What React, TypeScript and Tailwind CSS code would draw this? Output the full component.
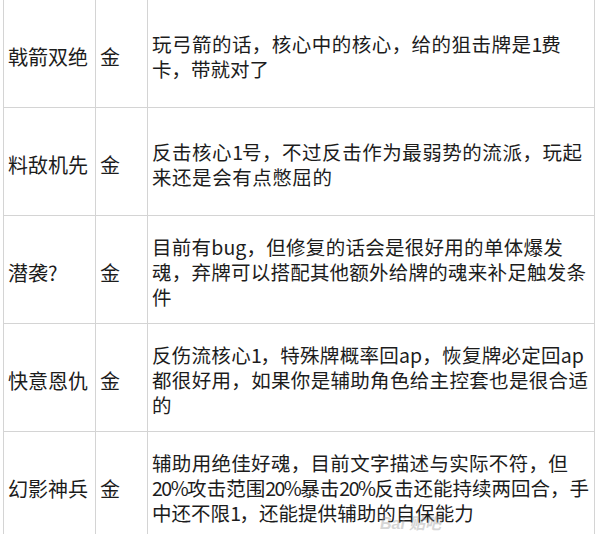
type Row = { name: string; grade: string; lines: [string, number][] };

// each description line with the width it spans in the original
const rows: Row[] = [
  {
    name: "戟箭双绝",
    grade: "金",
    lines: [
      ["玩弓箭的话，核心中的核心，给的狙击牌是1费", 409],
      ["卡，带就对了", 117],
    ],
  },
  {
    name: "料敌机先",
    grade: "金",
    lines: [
      ["反击核心1号，不过反击作为最弱势的流派，玩起", 430],
      ["来还是会有点憋屈的", 180],
    ],
  },
  {
    name: "潜袭?",
    grade: "金",
    lines: [
      ["目前有bug，但修复的话会是很好用的单体爆发", 411],
      ["魂，弃牌可以搭配其他额外给牌的魂来补足触发条", 434],
      ["件", 0],
    ],
  },
  {
    name: "快意恩仇",
    grade: "金",
    lines: [
      ["反伤流核心1，特殊牌概率回ap，恢复牌必定回ap", 432],
      ["都很好用，如果你是辅助角色给主控套也是很合适", 436],
      ["的", 0],
    ],
  },
  {
    name: "幻影神兵",
    grade: "金",
    lines: [
      ["辅助用绝佳好魂，目前文字描述与实际不符，但", 416],
      ["20%攻击范围20%暴击20%反击还能持续两回合，手", 423],
      ["中还不限1，还能提供辅助的自保能力", 322],
    ],
  },
];

// spread the glyphs over the line's width, latin/digit runs stay together
function Line({ text, width }: { text: string; width: number }) {
  const tokens = text.match(/[A-Za-z0-9%]+|./g) ?? [];
  if (!width) return <div>{text}</div>;
  return (
    <div className="flex justify-between whitespace-nowrap" style={{ width }}>
      {tokens.map((t, i) =>
        /^[0-9%]+$/.test(t) ? (
          <span key={i} className="tracking-[-1.5px]">
            {t}
          </span>
        ) : (
          <span key={i}>{t}</span>
        ),
      )}
    </div>
  );
}

export default function App() {
  return (
    <div
      className="relative h-[534px] w-[597px] overflow-hidden bg-white text-[20px] leading-[25px] text-[#1c1c1c]"
      style={{ fontFamily: '"Microsoft YaHei", "Noto Sans CJK SC", sans-serif' }}
    >
      <div className="ml-[3px] grid grid-cols-[92px_52px_448px]">
        {rows.map((r) => (
          <div key={r.name} className="contents">
            <div className="flex h-[108px] items-center border-b border-l border-[#d4d4d4] pl-[4px] pt-[6px] whitespace-nowrap">
              {r.name}
            </div>
            <div className="flex h-[108px] items-center border-b border-l border-[#d4d4d4] pl-[4px] pt-[6px]">
              {r.grade}
            </div>
            <div className="flex h-[108px] flex-col justify-center overflow-hidden border-b border-l border-r border-[#d4d4d4] pl-[4px] pt-[4px] text-[19.5px]">
              {r.lines.map(([l, w], i) => (
                <Line key={i} text={l} width={w} />
              ))}
            </div>
          </div>
        ))}
      </div>

      {/* faint watermark */}
      <div className="pointer-events-none absolute left-[380px] top-[512px] flex items-baseline gap-1 text-[16px] font-bold italic leading-[20px] text-[#9a9a9a] opacity-40">
        <span style={{ fontFamily: '"Liberation Sans", sans-serif' }}>Bai</span>
        <span>贴吧</span>
      </div>
    </div>
  );
}
